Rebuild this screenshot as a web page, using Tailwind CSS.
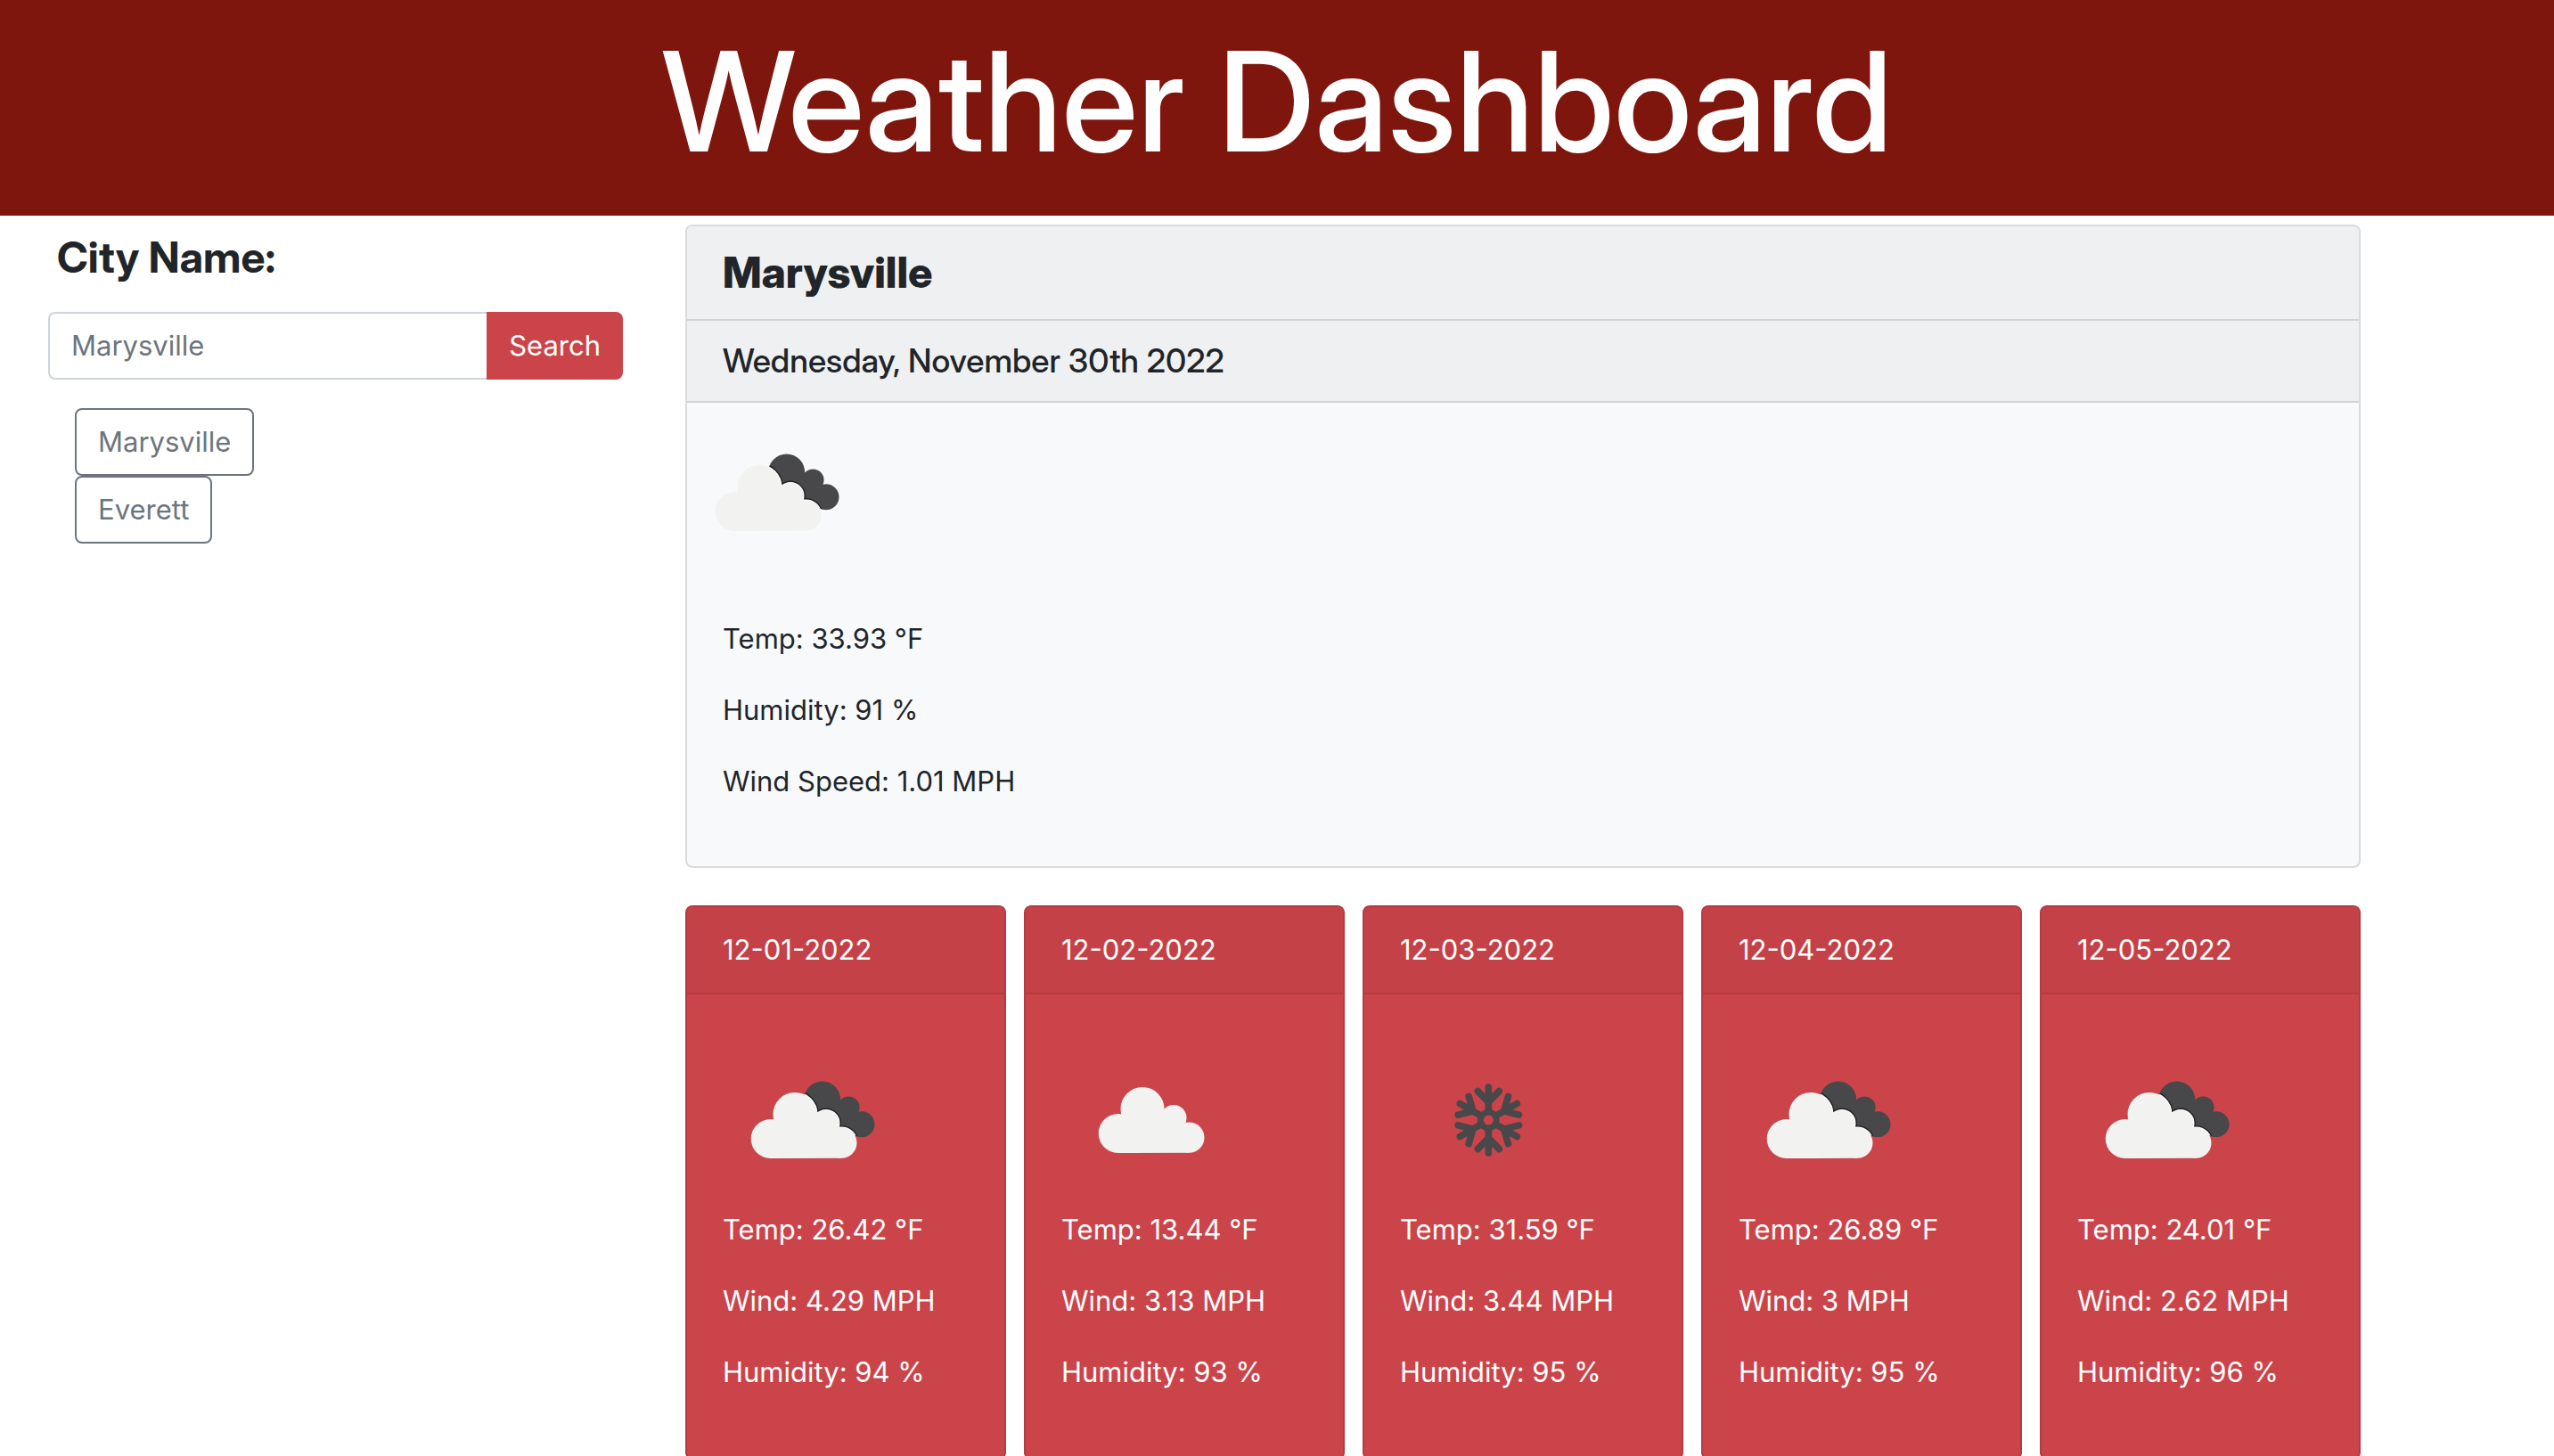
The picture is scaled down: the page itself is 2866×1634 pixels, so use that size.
<!DOCTYPE html>
<html lang="en">
<head>
<meta charset="utf-8">
<title>Weather Dashboard</title>
<script src="https://cdn.jsdelivr.net/npm/@tailwindcss/browser@4"></script>
</head>
<body class="h-screen overflow-hidden bg-white font-['Inter',sans-serif] text-[31px] leading-[48px] text-[#212529]">
<svg class="absolute size-0" aria-hidden="true">
  <defs>
    <g id="cloud">
      <circle cx="62.7" cy="116" r="22"/>
      <circle cx="90" cy="88.5" r="24.5"/>
      <circle cx="125" cy="98.5" r="14.5"/>
      <circle cx="142.3" cy="120.6" r="17.2"/>
      <path d="M62.7 138 60 118 67 92 90 88 125 96 145 108 142.3 137.8Z"/>
    </g>
    <clipPath id="backClip">
      <circle cx="110.7" cy="78" r="20.5"/>
      <circle cx="140.3" cy="86.7" r="12.3"/>
      <circle cx="155" cy="105.8" r="14.5"/>
      <path d="M110 70 131 78 141 82 155 98 152 118 115 118Z"/>
    </clipPath>
    <symbol id="broken-clouds" viewBox="-1 0 200 200">
      <g clip-path="url(#backClip)">
        <rect width="200" height="200" fill="#48484a"/>
        <use href="#cloud" x="-10" y="6" fill="none" stroke="#242426" stroke-width="5"/>
        <use href="#cloud" x="-10" y="6" fill="none" stroke="#ffffff" stroke-width="2"/>
      </g>
      <use href="#cloud" x="-10" y="6" fill="#f2f2f0"/>
    </symbol>
    <symbol id="scattered-clouds" viewBox="-1 0 200 200">
      <use href="#cloud" fill="#f2f2f0"/>
    </symbol>
    <g id="arm"><path d="M0-9V-37M-12-32.5 0-20 12-32.5"/></g>
    <symbol id="snow" viewBox="0 0 200 200">
      <g transform="translate(99.3 101)" fill="none" stroke="#48484a" stroke-width="7.6" stroke-linecap="round">
        <circle r="9" stroke-width="6.6"/>
        <use href="#arm"/>
        <use href="#arm" transform="rotate(60)"/>
        <use href="#arm" transform="rotate(120)"/>
        <use href="#arm" transform="rotate(180)"/>
        <use href="#arm" transform="rotate(240)"/>
        <use href="#arm" transform="rotate(300)"/>
      </g>
    </symbol>
  </defs>
</svg>

<header class="bg-[#7e160e] pt-[18px] pb-8 text-center text-white">
  <h1 class="font-['Inter_Display','Inter',sans-serif] text-[156px] leading-[192px] font-medium">Weather Dashboard</h1>
</header>

<div class="grid grid-cols-[645fr_1880fr] items-start gap-[70px] pt-[10px] pr-[217px] pl-[54px]">
  <aside>
    <form>
      <label for="city" class="block px-[10px] pt-2 font-['Inter_Display','Inter',sans-serif] text-[48px] leading-[58px] font-bold">City Name:</label>
      <div class="mt-8 flex h-[76px]">
        <input id="city" type="text" placeholder="Marysville" class="w-0 flex-1 rounded-l-lg border-2 border-r-0 border-[#ced4da] px-6 placeholder:text-[#6c757d]">
        <button type="button" class="rounded-r-lg bg-[#cb444a] px-[25px] text-white">Search</button>
      </div>
    </form>
    <div class="mt-8 flex flex-col items-start pl-[30px] text-[#6c757d]">
      <button type="button" class="rounded-lg border-2 border-[#6c757d] px-6 py-3">Marysville</button>
      <button type="button" class="rounded-lg border-2 border-[#6c757d] px-6 py-3">Everett</button>
    </div>
  </aside>

  <main>
    <section class="overflow-hidden rounded-lg border-2 border-[#d9dbdd] bg-[#f8f9fb]">
      <h2 class="border-b-2 border-[#d1d3d5] bg-[#eff0f2] px-10 py-6 font-['Inter_Display','Inter',sans-serif] text-[48px] leading-[56px] font-extrabold">Marysville</h2>
      <h3 class="border-b-2 border-[#d1d3d5] bg-[#eff0f2] px-10 py-6 font-['Inter_Display','Inter',sans-serif] text-[37px] leading-[42px] font-medium">Wednesday, November 30th 2022</h3>
      <svg class="size-[200px]" role="img" aria-label="Broken clouds"><use href="#broken-clouds"/></svg>
      <div class="flex flex-col gap-8 px-10 pt-[41px] pb-[71px]">
        <p>Temp: 33.93 °F</p>
        <p>Humidity: 91 %</p>
        <p>Wind Speed: 1.01 MPH</p>
      </div>
    </section>

    <div class="mt-[42px] grid grid-cols-5 gap-5 text-white">
      <article class="rounded-lg border-2 border-[#b33c42] bg-[#cb444a]">
        <h4 class="rounded-t-md border-b-2 border-[#b33c42] bg-[#c44247] px-10 py-6">12-01-2022</h4>
        <div class="flex flex-col gap-8 px-10 pt-10 pb-[72px]">
          <svg class="-mb-8 size-[200px]" role="img" aria-label="Broken clouds"><use href="#broken-clouds"/></svg>
          <p>Temp: 26.42 °F</p><p>Wind: 4.29 MPH</p><p>Humidity: 94 %</p>
        </div>
      </article>
      <article class="rounded-lg border-2 border-[#b33c42] bg-[#cb444a]">
        <h4 class="rounded-t-md border-b-2 border-[#b33c42] bg-[#c44247] px-10 py-6">12-02-2022</h4>
        <div class="flex flex-col gap-8 px-10 pt-10 pb-[72px]">
          <svg class="-mb-8 size-[200px]" role="img" aria-label="Scattered clouds"><use href="#scattered-clouds"/></svg>
          <p>Temp: 13.44 °F</p><p>Wind: 3.13 MPH</p><p>Humidity: 93 %</p>
        </div>
      </article>
      <article class="rounded-lg border-2 border-[#b33c42] bg-[#cb444a]">
        <h4 class="rounded-t-md border-b-2 border-[#b33c42] bg-[#c44247] px-10 py-6">12-03-2022</h4>
        <div class="flex flex-col gap-8 px-10 pt-10 pb-[72px]">
          <svg class="-mb-8 size-[200px]" role="img" aria-label="Snow"><use href="#snow"/></svg>
          <p>Temp: 31.59 °F</p><p>Wind: 3.44 MPH</p><p>Humidity: 95 %</p>
        </div>
      </article>
      <article class="rounded-lg border-2 border-[#b33c42] bg-[#cb444a]">
        <h4 class="rounded-t-md border-b-2 border-[#b33c42] bg-[#c44247] px-10 py-6">12-04-2022</h4>
        <div class="flex flex-col gap-8 px-10 pt-10 pb-[72px]">
          <svg class="-mb-8 size-[200px]" role="img" aria-label="Broken clouds"><use href="#broken-clouds"/></svg>
          <p>Temp: 26.89 °F</p><p>Wind: 3 MPH</p><p>Humidity: 95 %</p>
        </div>
      </article>
      <article class="rounded-lg border-2 border-[#b33c42] bg-[#cb444a]">
        <h4 class="rounded-t-md border-b-2 border-[#b33c42] bg-[#c44247] px-10 py-6">12-05-2022</h4>
        <div class="flex flex-col gap-8 px-10 pt-10 pb-[72px]">
          <svg class="-mb-8 size-[200px]" role="img" aria-label="Broken clouds"><use href="#broken-clouds"/></svg>
          <p>Temp: 24.01 °F</p><p>Wind: 2.62 MPH</p><p>Humidity: 96 %</p>
        </div>
      </article>
    </div>
  </main>
</div>
</body>
</html>
